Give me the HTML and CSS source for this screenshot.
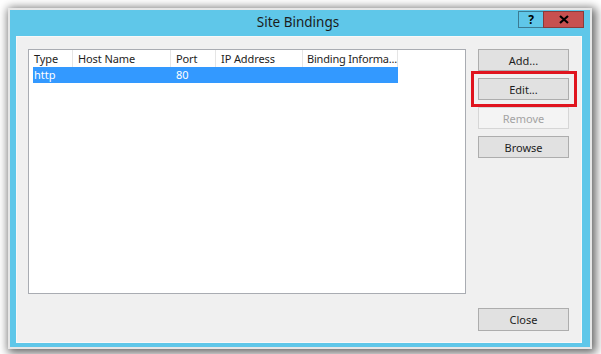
FILE: index.html
```html
<!DOCTYPE html>
<html>
<head>
<meta charset="utf-8">
<link rel="stylesheet" href="styles.css">
</head>
<body>
<div class="stage">
  <div class="window">
    <div class="titlebar">
      <div></div>
      <div class="title">Site Bindings</div>
      <div class="caption-btns">
        <div class="cap help">?</div>
        <div class="cap close">
          <svg width="10" height="9" viewBox="0 0 10 9"><path d="M1 1 L9 8 M9 1 L1 8" stroke="#000" stroke-width="2.2" fill="none"/></svg>
        </div>
      </div>
    </div>
    <div class="content">
      <div class="listbox">
        <div class="header">
          <div class="col c1">Type</div>
          <div class="col c2">Host Name</div>
          <div class="col c3">Port</div>
          <div class="col c4">IP Address</div>
          <div class="col c5">Binding Informa...</div>
        </div>
        <div class="row selected">
          <div class="cell c1">http</div>
          <div class="cell c2"></div>
          <div class="cell c3">80</div>
          <div class="cell c4"></div>
          <div class="cell c5"></div>
        </div>
      </div>
      <div class="buttons">
        <div class="btn">Add...</div>
        <div class="btn highlight">Edit...</div>
        <div class="btn disabled">Remove</div>
        <div class="btn">Browse</div>
        <div class="spacer"></div>
        <div class="btn closebtn">Close</div>
      </div>
    </div>
  </div>
</div>
</body>
</html>
```

FILE: styles.css
```css
html, body {
  margin: 0;
  padding: 0;
  background: #ffffff;
}
body {
  width: 601px;
  height: 354px;
  overflow: hidden;
  font-family: "Noto Sans", "Open Sans", sans-serif;
}
.stage {
  padding: 10px 11px 7px 10px;
}
.window {
  width: 580px;
  height: 337px;
  box-sizing: border-box;
  background: #5fc7e9;
  padding: 0 8px 4px 6px;
  display: flex;
  flex-direction: column;
  box-shadow: 0 0 0 2px #e6e6e6, 2px 2px 9px 4px rgba(0,0,0,0.6);
}
.titlebar {
  height: 26px;
  display: grid;
  grid-template-columns: 1fr auto 1fr;
  align-items: start;
}
.title {
  font-size: 13.5px;
  color: #1b1b1b;
  line-height: 22px;
  padding-top: 1px;
  margin-left: -2px;
}
.caption-btns {
  display: flex;
  justify-content: flex-end;
  padding-top: 1px;
  margin-right: -2px;
}
.cap {
  height: 17px;
  box-sizing: border-box;
  display: flex;
  align-items: center;
  justify-content: center;
  font-weight: bold;
  font-size: 12px;
  color: #000;
}
.help {
  width: 25px;
  background: #5fc7e9;
  border: 1px solid #3c7b93;
  border-right: none;
}
.close {
  width: 41px;
  background: #c75050;
  border: 1px solid #8a3a3a;
}
.content {
  flex: 1;
  background: #f0f0f0;
  box-shadow: inset 0 0 0 1px #f8f8f8;
  display: grid;
  grid-template-columns: 438px 91px;
  column-gap: 12px;
  padding: 13px 13px 12px 12px;
  align-items: start;
}
.listbox {
  height: 245px;
  box-sizing: border-box;
  background: #fff;
  border: 1px solid #a9acb2;
  font-size: 11px;
  color: #1e1e1e;
}
.header, .row {
  display: flex;
}
.header {
  height: 17px;
  line-height: 17px;
  letter-spacing: -0.1px;
}
.col {
  box-sizing: border-box;
  padding-left: 5px;
  border-right: 1px solid #e5e5e5;
  white-space: nowrap;
}
.c1 { width: 44px; }
.c2 { width: 98px; }
.c3 { width: 45px; }
.c4 { width: 87px; }
.c5 { width: 95px; }
.header .c5 { padding-left: 4px; letter-spacing: -0.2px; }
.row {
  height: 16px;
  line-height: 16px;
  margin-left: 4px;
  width: 365px;
}
.row .cell {
  box-sizing: border-box;
  padding-left: 1px;
  white-space: nowrap;
}
.row .c1 { width: 40px; }
.row .c3 { padding-left: 5px; }
.selected {
  background: #3399ff;
  color: #fff;
}
.buttons {
  height: 282px;
  display: flex;
  flex-direction: column;
}
.btn {
  height: 22px;
  box-sizing: border-box;
  background: #e1e1e1;
  border: 1px solid #adadad;
  font-size: 11px;
  color: #1e1e1e;
  display: flex;
  align-items: center;
  justify-content: center;
  margin-bottom: 7px;
}
.btn.highlight {
  position: relative;
}
.btn.highlight::after {
  content: "";
  position: absolute;
  left: -8px;
  top: -8px;
  right: -9px;
  bottom: -8px;
  border: 3px solid #e0141e;
}
.btn.disabled {
  background: #f4f4f4;
  border-color: #d6d6d6;
  color: #a3a3a3;
  margin-bottom: 7px;
}
.spacer {
  flex: 1;
}
.closebtn {
  height: 23px;
  margin-bottom: 0;
}
```
